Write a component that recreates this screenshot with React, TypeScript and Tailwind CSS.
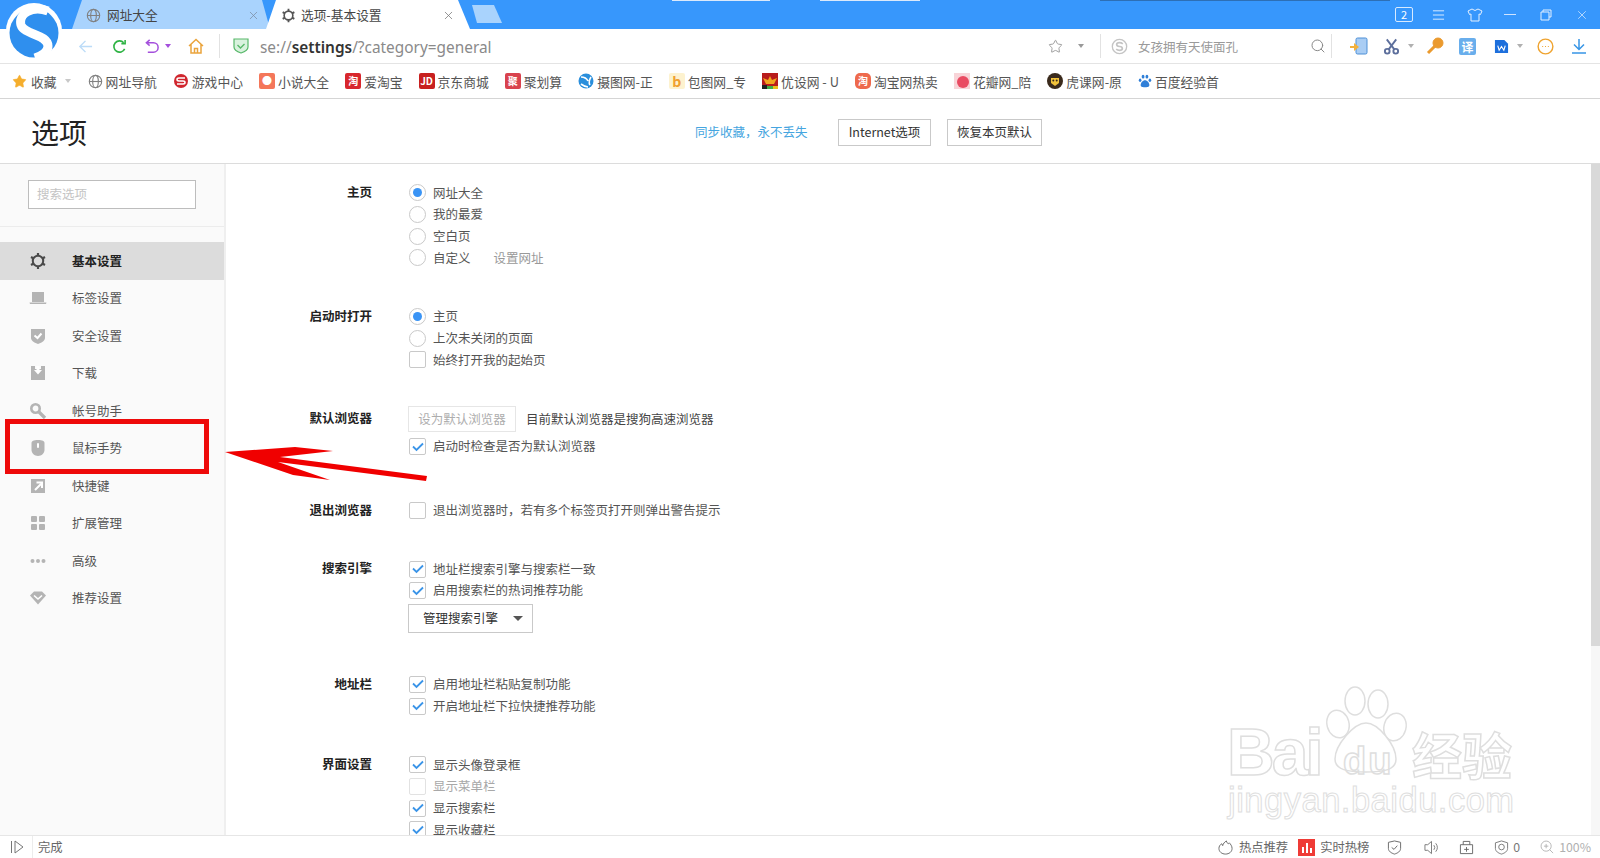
import React from 'react';
import { X, Star, Search } from 'lucide-react';

const Caret = ({ className = 'border-t-[#b0b0b0]' }: { className?: string }) => (
  <span className={`inline-block w-0 h-0 border-l-[3px] border-r-[3px] border-t-[4px] border-l-transparent border-r-transparent ${className}`} />
);

const GlobeIcon = ({ className = '' }: { className?: string }) => (
  <svg viewBox="0 0 16 16" className={className} fill="none" stroke="#808080" strokeWidth="1.2">
    <circle cx="8" cy="8" r="6.6" />
    <ellipse cx="8" cy="8" rx="3" ry="6.6" />
    <path d="M1.4 8h13.2" />
  </svg>
);

const GearIcon = ({ className = '', color = '#555' }: { className?: string; color?: string }) => (
  <svg viewBox="0 0 18 18" className={className} fill="none" stroke={color}>
    <circle cx="9" cy="9" r="5.2" strokeWidth="2" />
    <path d="M9 1v3M9 14v3M2 5l2.6 1.5M13.4 11.5 16 13M2 13l2.6-1.5M13.4 6.5 16 5" strokeWidth="2.2" />
  </svg>
);

const SideIcons: Record<string, React.ReactNode> = {
  gear: <GearIcon className="w-[18px] h-[18px]" color="#4a4a4a" />,
  laptop: (
    <svg viewBox="0 0 18 18" className="w-[18px] h-[18px]" fill="#b4b4b4"><path d="M3 3h12v10H3z" /><path d="M0.5 13.5h17l-.5 1.5H1z" /></svg>
  ),
  shield: (
    <svg viewBox="0 0 18 18" className="w-[18px] h-[18px]"><path d="M2 2h14v9c0 3-4 5-7 6-3-1-7-3-7-6z" fill="#b4b4b4" /><path d="M5.5 8.5 8.5 11l4-4.5" fill="none" stroke="#fff" strokeWidth="2" /></svg>
  ),
  download: (
    <svg viewBox="0 0 18 18" className="w-[18px] h-[18px]"><path d="M2 2h4v3h6V2h4v14H2z" fill="#b4b4b4" /><path d="M7.5 2h3v4h2.5L9 10.5 5 6h2.5z" fill="#fff" /></svg>
  ),
  key: (
    <svg viewBox="0 0 18 18" className="w-[18px] h-[18px]" fill="none" stroke="#b4b4b4"><circle cx="6.5" cy="6.5" r="4.2" strokeWidth="2.6" /><path d="m10 10 6 6" strokeWidth="3.2" /></svg>
  ),
  mouse: (
    <svg viewBox="0 0 18 18" className="w-[18px] h-[18px]"><path d="M2.5 4c0-2 2-3 6.5-3s6.5 1 6.5 3v7c0 3-3 6-6.5 6s-6.5-3-6.5-6z" fill="#b4b4b4" /><rect x="8" y="4" width="2" height="5" rx="1" fill="#fff" /></svg>
  ),
  shortcut: (
    <svg viewBox="0 0 18 18" className="w-[18px] h-[18px]"><rect x="2" y="2" width="14" height="14" fill="#b4b4b4" /><path d="M6 13 12 7M7.5 5.5h5.5V11" fill="none" stroke="#fff" strokeWidth="2" /></svg>
  ),
  grid: (
    <svg viewBox="0 0 18 18" className="w-[18px] h-[18px]" fill="#b4b4b4"><rect x="2" y="2" width="6" height="6" rx="1" /><rect x="10" y="2" width="6" height="6" rx="1" /><rect x="2" y="10" width="6" height="6" rx="1" /><rect x="10" y="10" width="6" height="6" rx="1" /></svg>
  ),
  dots: (
    <svg viewBox="0 0 18 18" className="w-[18px] h-[18px]" fill="#b4b4b4"><circle cx="3.5" cy="9" r="2" /><circle cx="9" cy="9" r="2" /><circle cx="14.5" cy="9" r="2" /></svg>
  ),
  heart: (
    <svg viewBox="0 0 18 18" className="w-[18px] h-[18px]"><path d="M1 6.5 5 2.5h8l4 4-8 9z" fill="#b4b4b4" /><path d="M5 6.5 9 10l4-3.5" fill="none" stroke="#fff" strokeWidth="1.6" /></svg>
  ),
};

const navItems = [
  ['gear', '基本设置'],
  ['laptop', '标签设置'],
  ['shield', '安全设置'],
  ['download', '下载'],
  ['key', '帐号助手'],
  ['mouse', '鼠标手势'],
  ['shortcut', '快捷键'],
  ['grid', '扩展管理'],
  ['dots', '高级'],
  ['heart', '推荐设置'],
];

const Tile = ({ bg, children, className = '' }: { bg: string; children?: React.ReactNode; className?: string }) => (
  <span className={`w-4 h-4 rounded-[2px] flex items-center justify-center text-white text-[10px] font-bold leading-none shrink-0 ${bg} ${className}`}>{children}</span>
);

const bookmarks: [React.ReactNode, string][] = [
  [<GlobeIcon className="w-[15px] h-[15px] shrink-0" />, '网址导航'],
  [<svg viewBox="0 0 16 16" className="w-4 h-4 shrink-0"><circle cx="8" cy="8" r="7" fill="#d0262e" /><path d="M12 5H6Q4 5 4 6.5T6 8h4q2 0 2 1.5T10 11H4" fill="none" stroke="#fff" strokeWidth="1.5" /></svg>, '游戏中心'],
  [<Tile bg="bg-[#f4775a]">●</Tile>, '小说大全'],
  [<Tile bg="bg-[#d8272d]">淘</Tile>, '爱淘宝'],
  [<Tile bg="bg-[#c8201f]">JD</Tile>, '京东商城'],
  [<Tile bg="bg-[#d9434e]">聚</Tile>, '聚划算'],
  [<svg viewBox="0 0 16 16" className="w-4 h-4 shrink-0"><circle cx="8" cy="8" r="7.5" fill="#2a8fdc" /><path d="M3 4q5 0 7 4M13 4q-3 5-1 8M3 11q4 3 7 3" fill="none" stroke="#fff" strokeWidth="1.6" /></svg>, '摄图网-正'],
  [<Tile bg="bg-[#fdf2cf]" className="!text-[#f0a030] !text-[14px]">b</Tile>, '包图网_专'],
  [<svg viewBox="0 0 16 16" className="w-4 h-4 shrink-0"><rect width="16" height="16" fill="#b81c1c" /><path d="M1 5l5 2 2-4 2 4 5-2-3 6H4z" fill="#f2a51e" /><rect y="12" width="5" height="4" fill="#222" /><rect x="5" y="13" width="6" height="3" fill="#3fae49" /><rect x="11" y="13" width="5" height="3" fill="#e8c01b" /></svg>, '优设网 - U'],
  [<Tile bg="bg-[#ee6a4d]" className="rounded-[5px]">淘</Tile>, '淘宝网热卖'],
  [<svg viewBox="0 0 16 16" className="w-4 h-4 shrink-0"><rect width="16" height="16" fill="#f8d4d8" /><circle cx="9" cy="9" r="6" fill="#e94b62" /></svg>, '花瓣网_陪'],
  [<svg viewBox="0 0 16 16" className="w-4 h-4 shrink-0"><circle cx="8" cy="8" r="8" fill="#3a2a1c" /><path d="M4 5h8v5l-4 3-4-3z" fill="#f3c33a" /><circle cx="6.3" cy="7.5" r="1" fill="#3a2a1c" /><circle cx="9.7" cy="7.5" r="1" fill="#3a2a1c" /></svg>, '虎课网-原'],
  [<svg viewBox="0 0 16 16" className="w-[14px] h-4 shrink-0" fill="#2f7fd8"><ellipse cx="5.8" cy="3" rx="1.6" ry="2.2" /><ellipse cx="10.2" cy="3" rx="1.6" ry="2.2" /><ellipse cx="2.4" cy="7" rx="1.5" ry="2" /><ellipse cx="13.6" cy="7" rx="1.5" ry="2" /><path d="M8 7c2.5 0 5 3 5 5.5S10 15 8 15s-5 0-5-2.5S5.5 7 8 7z" /></svg>, '百度经验首'],
];

const Radio = ({ on }: { on?: boolean }) => (
  <span className="w-[17px] h-[17px] rounded-full border border-[#c9c9c9] bg-white flex items-center justify-center shrink-0">
    {on && <span className="w-[9px] h-[9px] rounded-full bg-[#3a94f5]" />}
  </span>
);

const Check = ({ on, dim }: { on?: boolean; dim?: boolean }) => (
  <span className={`w-[17px] h-[17px] rounded-[2px] border bg-white flex items-center justify-center shrink-0 ${dim ? 'border-[#e2e2e2]' : 'border-[#c9c9c9]'}`}>
    {on && (
      <svg viewBox="0 0 12 12" className="w-[12px] h-[12px]" fill="none" stroke="#3a94e8" strokeWidth="1.8"><path d="M1 5.5 4.5 9 11 2.5" /></svg>
    )}
  </span>
);

const Row = ({ box, children, muted }: { box: React.ReactNode; children: React.ReactNode; muted?: boolean }) => (
  <div className={`h-[21.7px] flex items-center gap-[7px] ${muted ? 'text-[#a8a8a8]' : 'text-[#555]'}`}>
    {box}
    <span className="leading-none whitespace-nowrap">{children}</span>
  </div>
);

const Group = ({ title, className = '', titleClass = '', children }: { title: string; className?: string; titleClass?: string; children: React.ReactNode }) => (
  <div className={`flex ${className}`}>
    <div className={`w-[146px] shrink-0 text-right font-bold text-[#222] h-[21.7px] leading-[19px] ${titleClass}`}>{title}</div>
    <div className="ml-[37px] flex flex-col">{children}</div>
  </div>
);

export default function App() {
  return (
    <div className="relative w-[1600px] h-[858px] overflow-hidden bg-white flex flex-col text-[12.5px] text-[#444] font-['Noto_Sans_CJK_SC','Noto_Sans',sans-serif]">
      {/* title bar + tabs */}
      <div className="h-[29px] shrink-0 bg-[#3797fc] flex items-end pl-[72px] relative">
        <div className="w-[198px] h-[29px] pt-[1px] bg-[#a9d3fd] [clip-path:polygon(10px_0,190px_0,198px_100%,0_100%)] flex items-center pl-[14px] pr-[10px] gap-[6px] text-[#444] text-[12.7px]">
          <GlobeIcon className="w-[15px] h-[15px] shrink-0" />
          <span className="flex-1 leading-none">网址大全</span>
          <X className="w-[13px] h-[13px] text-[#7c8ea3]" strokeWidth={1.4} />
        </div>
        <div className="-ml-[4px] w-[204px] h-[29px] pt-[1px] bg-white [clip-path:polygon(10px_0,192px_0,204px_100%,0_100%)] flex items-center pl-[15px] pr-[15px] gap-[5px] text-[#444] text-[12.7px]">
          <GearIcon className="w-[15px] h-[15px] shrink-0" color="#555" />
          <span className="flex-1 leading-none">选项-基本设置</span>
          <X className="w-[13px] h-[13px] text-[#777]" strokeWidth={1.4} />
        </div>
        <div className="ml-[2px] mb-[6px] w-[30px] h-[18px] bg-[#a9d3fd] [clip-path:polygon(0_0,22px_0,30px_100%,5px_100%)]" />
        <div className="ml-auto flex items-center h-[29px] text-white">
          <span className="w-[18px] h-[15px] mr-[19px] rounded-[2px] border border-[#d8eaff] text-[11px] leading-[13px] text-center">2</span>
          <svg viewBox="0 0 14 12" className="w-[13px] h-[12px] mr-[22px]" fill="none" stroke="#e4f0ff"><path d="M1 1.5h12M1 6h12M1 10.5h12" /></svg>
          <svg viewBox="0 0 16 14" className="w-[16px] h-[14px] mr-[21px]" fill="none" stroke="#e4f0ff"><path d="M5 1 1 3l1.5 3.5L4 6v7h8V6l1.5.5L15 3l-4-2q-3 3-6 0z" /></svg>
          <span className="w-[12px] h-px bg-[#cfe4ff] mr-[24px]" />
          <svg viewBox="0 0 12 12" className="w-[12px] h-[12px] mr-[23px]" fill="none" stroke="#e4f0ff"><path d="M3 3V1h8v7H9M1 3h8v8H1z" /></svg>
          <X className="w-[14px] h-[14px] mr-[11px] text-[#e4f0ff]" strokeWidth={1.2} />
        </div>
      </div>

      {/* address bar */}
      <div className="h-[35px] shrink-0 flex items-center pl-[79px] border-b border-[#e4e4e4]">
        <svg viewBox="0 0 16 16" className="w-[15px] h-[15px] ml-[-1px]" fill="none" stroke="#bcdcf8" strokeWidth="1.5"><path d="M15 8H2M8 2 2 8l6 6" /></svg>
        <svg viewBox="0 0 16 16" className="w-[15px] h-[15px] ml-[19px]" fill="none" stroke="#2fb344" strokeWidth="1.7"><path d="M13.5 10.5A6 6 0 1 1 12.5 4M14 1v4h-4" /></svg>
        <svg viewBox="0 0 16 16" className="w-[15px] h-[15px] ml-[18px]" fill="none" stroke="#a44fdc" strokeWidth="1.6"><path d="M5 1 1.5 4 5 7M2 4h7a4.5 4.5 0 0 1 0 10H3" /></svg>
        <span className="ml-[5px] flex"><Caret className="border-t-[#a44fdc]" /></span>
        <svg viewBox="0 0 16 16" className="w-[16px] h-[16px] ml-[17px]" fill="none" stroke="#eaa43c" strokeWidth="1.5"><path d="M1 8 8 1.5 15 8M3 6.5V15h10V6.5M6.5 15v-4.5h3V15" /></svg>
        <span className="w-px h-[24px] bg-[#e2e2e2] ml-[15px]" />
        <svg viewBox="0 0 16 16" className="w-[16px] h-[16px] ml-[13px]"><path d="M1 1h14v8c0 3-4 5-7 6-3-1-7-3-7-6z" fill="#d9f2de" stroke="#58b86a" strokeWidth="1.2" /><path d="M4.5 7 7.5 10l4-4" fill="none" stroke="#58b86a" strokeWidth="1.4" /></svg>
        <span className="ml-[11px] pt-[3px] text-[15.4px] leading-none text-[#8a8a8a] font-['Noto_Sans',sans-serif]">se://<span className="text-[#333] font-semibold">settings</span>/?category=general</span>
        <Star className="ml-auto w-[15px] h-[15px] text-[#999]" strokeWidth={1.5} />
        <span className="ml-[15px] flex"><Caret className="border-t-[#999]" /></span>
        <span className="w-px h-[24px] bg-[#e2e2e2] ml-[16px]" />
        <svg viewBox="0 0 18 18" className="w-[17px] h-[17px] ml-[10px]" fill="none" stroke="#c4c4c4"><circle cx="9" cy="9" r="7.6" strokeWidth="1.4" /><path d="M12.5 6.3Q11 5 9 5 6 5 6 7q0 1.8 3 2 3 .3 3 2 0 2-3 2-2 0-3.5-1.3" strokeWidth="1.8" /></svg>
        <span className="ml-[10px] w-[172px] pt-[2px] leading-none text-[#9a9a9a] whitespace-nowrap">女孩拥有天使面孔</span>
        <Search className="w-[16px] h-[16px] text-[#888]" strokeWidth={1.5} />
        <span className="w-px h-[24px] bg-[#e2e2e2] ml-[5px]" />
        <svg viewBox="0 0 18 18" className="w-[18px] h-[18px] ml-[18px]"><rect x="6" y="1" width="11" height="16" rx="1.5" fill="#a9cdf4" stroke="#4c8fd6" /><path d="M0 9h4V6l5 4-5 4v-3H0z" fill="#f3b13c" /></svg>
        <svg viewBox="0 0 18 18" className="w-[17px] h-[17px] ml-[15px]" fill="none" stroke="#5d6f9c" strokeWidth="2"><path d="M4 1.5 12 12M14 1.5 6 12" /><circle cx="4.5" cy="14" r="2.5" /><circle cx="13.5" cy="14" r="2.5" /></svg>
        <span className="ml-[8px] flex"><Caret /></span>
        <svg viewBox="0 0 18 18" className="w-[18px] h-[18px] ml-[12px]" fill="none" stroke="#eb9a2e"><circle cx="12" cy="6" r="5" fill="#eb9a2e" strokeWidth="1" /><path d="M9 9 2 16" strokeWidth="3" /></svg>
        <span className="ml-[15px] w-[17px] h-[17px] rounded-[2px] bg-[#69aeec] text-white text-[12px] leading-[17px] text-center font-bold">译</span>
        <svg viewBox="0 0 16 16" className="w-[15px] h-[15px] ml-[18px]"><path d="M1 1h10l4 4v10H1z" fill="#1d6fdc" /><path d="M4 7l1.5 5L8 8l2.5 4L12 7" fill="none" stroke="#fff" strokeWidth="1.2" /></svg>
        <span className="ml-[8px] flex"><Caret /></span>
        <svg viewBox="0 0 18 18" className="w-[17px] h-[17px] ml-[14px]" fill="none" stroke="#efa32f" strokeWidth="1.5"><circle cx="9" cy="9" r="7.8" /><path d="M5.5 9h1M8.5 9h1M11.5 9h1" strokeWidth="1.2" /></svg>
        <svg viewBox="0 0 16 16" className="w-[16px] h-[16px] ml-[17px] mr-[13px]" fill="none" stroke="#3795e6" strokeWidth="1.5"><path d="M8 1v10M3 6.5 8 11.5l5-5M1 15h14" /></svg>
      </div>

      {/* bookmarks bar */}
      <div className="h-[35px] shrink-0 flex items-center pl-[12px] border-b border-[#d5d5d5] text-[12.8px] text-[#555]">
        <Star className="w-[15px] h-[15px] text-[#f5ae2d] fill-[#f5ae2d]" strokeWidth={1} />
        <span className="ml-[4px] pt-[2px] leading-none">收藏</span>
        <span className="ml-[8px] mr-[17px] flex"><Caret className="border-t-[#c8c8c8]" /></span>
        <div className="flex items-center gap-[16px]">
          {bookmarks.map(([icon, label]) => (
            <div key={label} className="flex items-center gap-[3px]">
              {icon}
              <span className="pt-[2px] leading-none whitespace-nowrap">{label}</span>
            </div>
          ))}
        </div>
      </div>

      {/* settings header */}
      <div className="h-[65px] shrink-0 flex items-center border-b border-[#dcdcdc] pl-[31px] pt-[2px]">
        <h1 className="text-[28px] leading-none text-[#222] w-[664px]">选项</h1>
        <span className="text-[#45a5e0] w-[143px] leading-none">同步收藏，永不丢失</span>
        <div className="h-[27px] w-[93px] border border-[#c9c9c9] flex items-center justify-center text-[#333] leading-none">Internet选项</div>
        <div className="h-[27px] w-[95px] ml-[16px] border border-[#c9c9c9] flex items-center justify-center text-[#333] leading-none">恢复本页默认</div>
      </div>

      {/* body */}
      <div className="flex-1 min-h-0 flex overflow-hidden">
        <aside className="w-[226px] shrink-0 bg-[#fafafa] border-r-2 border-[#efefef] flex flex-col">
          <div className="h-[63px] shrink-0 border-b border-[#ececec] pl-[28px] pt-[16px]">
            <div className="w-[168px] h-[29px] border border-[#bdbdbd] bg-white flex items-center pl-[8px] text-[#c4c4c4] leading-none">搜索选项</div>
          </div>
          <nav className="pt-[15px] flex flex-col">
            {navItems.map(([icon, label], i) => (
              <div key={label} className={`h-[37.5px] flex items-center pl-[29px] ${i === 0 ? 'bg-[#dcdcdc] font-bold text-[#222]' : 'text-[#555]'}`}>
                {SideIcons[icon]}
                <span className="ml-[25px] leading-none">{label}</span>
              </div>
            ))}
          </nav>
        </aside>

        <main className="flex-1 min-w-0 overflow-hidden pt-[18px]">
          <Group title="主页">
            <Row box={<Radio on />}>网址大全</Row>
            <Row box={<Radio />}>我的最爱</Row>
            <Row box={<Radio />}>空白页</Row>
            <Row box={<Radio />}>自定义<span className="ml-[23px] text-[#999]">设置网址</span></Row>
          </Group>
          <Group title="启动时打开" className="mt-[37px]">
            <Row box={<Radio on />}>主页</Row>
            <Row box={<Radio />}>上次未关闭的页面</Row>
            <Row box={<Check />}>始终打开我的起始页</Row>
          </Group>
          <Group title="默认浏览器" className="mt-[35px]" titleClass="pt-[2px]">
            <div className="flex items-center h-[26px] -ml-[1px]">
              <div className="w-[108px] h-[26px] border border-[#e6e6e6] flex items-center justify-center text-[#adadad] leading-none">设为默认浏览器</div>
              <span className="ml-[10px] text-[#444] leading-none">目前默认浏览器是搜狗高速浏览器</span>
            </div>
            <div className="mt-[4px]"><Row box={<Check on />}>启动时检查是否为默认浏览器</Row></div>
          </Group>
          <Group title="退出浏览器" className="mt-[42px]">
            <Row box={<Check />}>退出浏览器时，若有多个标签页打开则弹出警告提示</Row>
          </Group>
          <Group title="搜索引擎" className="mt-[37px]">
            <Row box={<Check on />}>地址栏搜索引擎与搜索栏一致</Row>
            <Row box={<Check on />}>启用搜索栏的热词推荐功能</Row>
            <div className="mt-[2px] -ml-[1px] w-[125px] h-[29px] border border-[#c9c9c9] flex items-center pl-[14px] text-[#333] leading-none">
              管理搜索引擎
              <span className="ml-[15px] flex"><span className="w-0 h-0 border-l-[5px] border-r-[5px] border-t-[5px] border-l-transparent border-r-transparent border-t-[#555]" /></span>
            </div>
          </Group>
          <Group title="地址栏" className="mt-[41px]">
            <Row box={<Check on />}>启用地址栏粘贴复制功能</Row>
            <Row box={<Check on />}>开启地址栏下拉快捷推荐功能</Row>
          </Group>
          <Group title="界面设置" className="mt-[37px]">
            <Row box={<Check on />}>显示头像登录框</Row>
            <Row box={<Check dim />} muted>显示菜单栏</Row>
            <Row box={<Check on />}>显示搜索栏</Row>
            <Row box={<Check on />}>显示收藏栏</Row>
          </Group>
        </main>

        <div className="w-[9px] shrink-0 bg-[#f7f7f7]">
          <div className="h-[482px] bg-[#d9d9d9]" />
        </div>
      </div>

      {/* status bar */}
      <div className="h-[23px] shrink-0 border-t border-[#e6e6e6] flex items-center text-[#666] text-[12.3px]">
        <svg viewBox="0 0 14 14" className="w-[14px] h-[14px] ml-[10px]" fill="none" stroke="#777"><path d="M1.5 1v12M5 1l8 6-8 6z" /></svg>
        <span className="w-px h-[23px] bg-[#ececec] ml-[8px]" />
        <span className="ml-[5px] leading-none">完成</span>
        <svg viewBox="0 0 16 16" className="w-[15px] h-[15px] ml-auto" fill="none" stroke="#666"><path d="M8 15c-4 0-7-2.5-7-6 0-2 1-4 3-5l1 2c.5-2 2-4 4-5 0 2 1 2 2 3l1-1c1.5 1.5 3 3.5 3 6 0 3.5-3 6-7 6z" /></svg>
        <span className="ml-[6px] leading-none">热点推荐</span>
        <span className="ml-[10px] w-[17px] h-[17px] bg-[#ef3b36] flex items-end justify-center gap-[2px] pb-[3px]">
          <span className="w-[2px] h-[6px] bg-white" /><span className="w-[2px] h-[10px] bg-white" /><span className="w-[2px] h-[5px] bg-white" />
        </span>
        <span className="ml-[5px] leading-none">实时热榜</span>
        <svg viewBox="0 0 16 16" className="w-[15px] h-[15px] ml-[18px]" fill="none" stroke="#666"><path d="M1.5 2.5 8 1l6.5 1.5V9c0 3-3 5-6.5 6C4.5 14 1.5 12 1.5 9z" /><path d="m5 8 2.5 2L11 6" /></svg>
        <svg viewBox="0 0 16 16" className="w-[15px] h-[15px] ml-[22px]" fill="none" stroke="#777"><path d="M1 5h3l4-3.5v13L4 11H1zM10.5 5.5q2 2.5 0 5M12.5 3.5q3.5 4.5 0 9" /></svg>
        <svg viewBox="0 0 16 16" className="w-[15px] h-[15px] ml-[20px]" fill="none" stroke="#666"><path d="M1.5 5h13v9.5h-13zM4.5 5V1.5h7V5M8 7.5v5M5.500 10h5" /></svg>
        <svg viewBox="0 0 16 16" className="w-[15px] h-[15px] ml-[20px]" fill="none" stroke="#777"><path d="M1.5 3 8 1l6.5 2v6c0 3-3 5-6.5 6-3.5-1-6.5-3-6.5-6z" /><circle cx="8" cy="7.5" r="3" /></svg>
        <span className="ml-[4px] leading-none text-[#777]">0</span>
        <svg viewBox="0 0 16 16" className="w-[14px] h-[14px] ml-[20px]" fill="none" stroke="#b0b0b0"><circle cx="7" cy="7" r="5.8" /><path d="m11 11 4 4M4.5 7h5M7 4.5v5" /></svg>
        <span className="ml-[5px] mr-[9px] leading-none text-[#b0b0b0]">100%</span>
      </div>

      {/* logo sits over the tab strip and address bar */}
      <svg viewBox="0 0 60 60" className="absolute left-[4px] top-[2px] w-[60px] h-[60px]">
        <circle cx="30" cy="29" r="28" fill="#fff" />
        <circle cx="30" cy="31" r="24.5" fill="#2f8fee" />
        <path d="M44 9C28 3 14 12 17 23c3 10 27 9 27 21 0 6-7 10-13 12" fill="none" stroke="#fff" strokeWidth="9" />
      </svg>

      {/* top edge leftovers from the capture */}
      <div className="absolute top-0 left-[672px] w-[98px] h-px bg-[#dbe9fb]" />
      <div className="absolute top-0 left-[820px] w-[100px] h-px bg-[#dbe9fb]" />
      <div className="absolute top-0 left-[1100px] w-[290px] h-px bg-[#2d6fb5]" />

      {/* annotation: red box + arrow */}
      <div className="absolute left-[5px] top-[419px] w-[204px] h-[55px] border-[5px] border-[#ee0a0a]" />
      <svg viewBox="0 0 1600 858" className="absolute inset-0 w-[1600px] h-[858px] pointer-events-none">
        <polygon points="225,452 295,447 333,451 280,457 427,476 426,481 278,462 330,480 293,475" fill="#f00000" />
      </svg>

      {/* baidu watermark */}
      <div className="absolute left-[1228px] top-[684px] w-[290px] h-[142px] pointer-events-none text-transparent [-webkit-text-stroke:1.5px_#dedede] font-['Liberation_Sans',sans-serif]">
        <span className="absolute left-[-1px] top-[35px] text-[66px] leading-none font-bold tracking-[-3px]">Bai</span>
        <svg viewBox="0 0 90 90" className="absolute left-[97px] top-[2px] w-[90px] h-[92px]" fill="#fff" stroke="#dedede" strokeWidth="1.5">
          <ellipse cx="30" cy="14" rx="10" ry="14" />
          <ellipse cx="53" cy="17" rx="10" ry="14" />
          <ellipse cx="13" cy="37" rx="11" ry="14" transform="rotate(-15 13 37)" />
          <ellipse cx="70" cy="40" rx="11" ry="14" transform="rotate(15 70 40)" />
          <path d="M41 36c12 0 30 22 30 36 0 11-12 13-30 13S10 83 10 72c0-14 19-36 31-36z" />
        </svg>
        <span className="absolute left-[115px] top-[58px] text-[38px] leading-none tracking-[2px] font-bold">du</span>
        <span className="absolute left-[184px] top-[44px] text-[50px] leading-none font-bold font-['Noto_Sans_CJK_SC',sans-serif]">经验</span>
        <span className="absolute left-0 top-[99px] text-[34.500px] leading-none tracking-[0.5px] [-webkit-text-stroke:1px_#dedede]">jingyan.baidu.com</span>
      </div>
    </div>
  );
}
